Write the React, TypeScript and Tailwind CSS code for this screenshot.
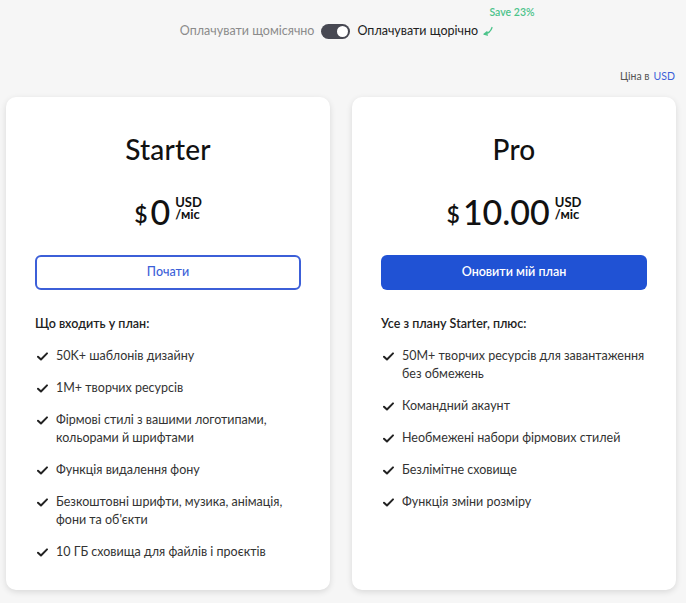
import React from "react";

const Check = () => (
    <svg viewBox="0 0 12 10" className="w-[11px] h-[9px] shrink-0 mt-[5px]" fill="none">
        <path d="M1 5.2l3.3 3.2L11 1.5" stroke="#222" strokeWidth={2.2} strokeLinecap="round" strokeLinejoin="round" />
    </svg>
);

type Plan = {
    name: string;
    price: string;
    cta: string;
    primary?: boolean;
    heading: string;
    items: string[];
};

const plans: Plan[] = [
    {
        name: "Starter",
        price: "0",
        cta: "Почати",
        heading: "Що входить у план:",
        items: [
            "50K+ шаблонів дизайну",
            "1M+ творчих ресурсів",
            "Фірмові стилі з вашими логотипами, кольорами й шрифтами",
            "Функція видалення фону",
            "Безкоштовні шрифти, музика, анімація, фони та об'єкти",
            "10 ГБ сховища для файлів і проєктів",
        ],
    },
    {
        name: "Pro",
        price: "10.00",
        cta: "Оновити мій план",
        primary: true,
        heading: "Усе з плану Starter, плюс:",
        items: [
            "50M+ творчих ресурсів для завантаження без обмежень",
            "Командний акаунт",
            "Необмежені набори фірмових стилей",
            "Безлімітне сховище",
            "Функція зміни розміру",
        ],
    },
];

const Card = ({ plan }: { plan: Plan }) => (
    <div className="w-[324px] h-[493px] bg-white rounded-[10px] shadow-[0_2px_6px_rgba(0,0,0,0.12)] px-[29px] pt-[37px]">
        <div className="text-center text-[28px] leading-[30px] text-[#111] font-medium tracking-[0.2px]">{plan.name}</div>
        <div className="flex items-center justify-center mt-[31px] text-[#111]">
            <span className="text-[23px] leading-[24px] font-semibold mr-[3px] mt-[5px]">$</span>
            <span className="text-[34px] leading-[34px] font-medium">{plan.price}</span>
            <span className="flex flex-col text-[13px] leading-[15px] font-bold ml-[5px] -mt-[6px]">
                <span className="-mb-[3px]">USD</span>
                <span>/міс</span>
            </span>
        </div>
        <button
            className={
                plan.primary
                    ? "mt-[26px] w-full h-[35px] rounded-[6px] bg-[#2052d4] text-white text-[12.5px] font-semibold"
                    : "mt-[26px] w-full h-[35px] rounded-[6px] border-2 border-[#3c5fd8] text-[#3c5fd8] text-[12.5px] font-medium"
            }
        >
            {plan.cta}
        </button>
        <div className="mt-[25px] text-[12.5px] font-semibold text-[#222]">{plan.heading}</div>
        <ul className="mt-[13px] flex flex-col gap-[14px]">
            {plan.items.map((it) => (
                <li key={it} className="flex gap-[8px] pl-[2px] text-[12.5px] leading-[18px] text-[#333]">
                    <Check />
                    <span>{it}</span>
                </li>
            ))}
        </ul>
    </div>
);

export default function App() {
    return (
        <div className="w-[686px] h-[603px] bg-[#f6f6f6] overflow-hidden" style={{ fontFamily: "Lato, 'Noto Sans', sans-serif" }}>
            <div className="relative flex items-center justify-center h-[30px] mt-[16px] gap-[7px] text-[12.5px]">
                <span className="text-[#8b8b8b] -ml-[28px]">Оплачувати щомісячно</span>
                <span className="w-[29px] h-[15px] rounded-full bg-[#474852] flex items-center justify-end pr-[2px]">
                    <span className="w-[11px] h-[11px] rounded-full bg-white" />
                </span>
                <span className="text-[#222] relative">
                    Оплачувати щорічно
                    <span className="absolute left-[132px] -top-[17px] text-[10.5px] font-semibold text-[#4cc38a] whitespace-nowrap">Save 23%</span>
                    <svg viewBox="0 0 12 10" className="absolute left-[125px] top-[4px] w-[12px] h-[10px]" fill="none">
                        <path d="M10 1.5C9 5 6 7.5 2 8.2M2 8.2l3-2.4M2 8.2l3.4 0.8" stroke="#4cc38a" strokeWidth={1.3} strokeLinecap="round" />
                    </svg>
                </span>
            </div>
            <div className="flex justify-end pr-[11px] mt-[23px] text-[10.5px] text-[#555]">
                Ціна в <span className="text-[#3c5fd8] ml-[4px]">USD</span>
            </div>
            <div className="flex gap-[22px] pl-[6px] mt-[12px]">
                {plans.map((p) => (
                    <Card key={p.name} plan={p} />
                ))}
            </div>
        </div>
    );
}
